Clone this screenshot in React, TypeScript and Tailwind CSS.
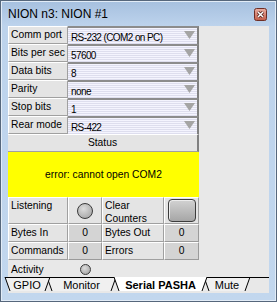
const settings = [
  { label: "Comm port", value: "RS-232 (COM2 on PC)" },
  { label: "Bits per sec", value: "57600" },
  { label: "Data bits", value: "8" },
  { label: "Parity", value: "none" },
  { label: "Stop bits", value: "1" },
  { label: "Rear mode", value: "RS-422" },
];

const tabs = [
  { name: "GPIO", w: "w-[36px]", ml: "ml-[1px]" },
  { name: "Monitor", w: "w-[59px]", ml: "ml-[7px]" },
  { name: "Serial PASHA", w: "w-[83px]", ml: "ml-[8px]", active: true },
  { name: "Mute", w: "w-[36px]", ml: "ml-[7px]" },
];

const cell =
  "bg-[#e4e4e4] border-t border-l border-t-white border-l-white border-b border-r border-b-[#a0a0a0] border-r-[#a0a0a0]";
const counter =
  "bg-[#d4d4d4] border-t border-l border-t-white border-l-white border-b border-r border-b-[#9a9a9a] border-r-[#9a9a9a] flex items-center justify-center";

function Led({ size }: { size: "lg" | "sm" }) {
  return (
    <div
      className={`rounded-full border border-[#3a3a3a] bg-[radial-gradient(circle_at_40%_35%,#dcdcdc,#9c9c9c)] ${
        size === "lg" ? "w-[16px] h-[16px]" : "w-[11px] h-[11px]"
      }`}
    />
  );
}

function TabOutline() {
  // bottom sheet tabs, screen coordinates
  const back = [
    { tl: 204, bl: 209, br: 245, tr: 250 },
    { tl: 47, bl: 52, br: 111, tr: 116 },
    { tl: 5, bl: 10, br: 45, tr: 50 },
  ];
  const act = { tl: 114, bl: 119, br: 202, tr: 207 };
  return (
    <svg
      className="absolute left-[-8px] top-0 pointer-events-none"
      width="277"
      height="16"
      viewBox="0 277 277 16"
    >
      {back.map((t, i) => (
        <g key={i}>
          <polygon points={`${t.tl},278 ${t.tr},278 ${t.br},292 ${t.bl},292`} fill="#f0f0f0" />
          <polyline points={`${t.tl},278 ${t.bl},292`} stroke="#000" fill="none" />
          <polyline points={`${t.br},292 ${t.tr},278`} stroke="#000" fill="none" />
        </g>
      ))}
      <polygon points={`${act.tl},278 ${act.tr},278 ${act.br},292 ${act.bl},292`} fill="#fff" />
      <polyline points={`${act.tl},278 ${act.bl},292`} stroke="#000" fill="none" />
      <polyline points={`${act.br},292 ${act.tr},278`} stroke="#000" fill="none" />
      <line x1="5" y1="278.5" x2={act.tl} y2="278.5" stroke="#000" />
      <line x1={act.tr} y1="278.5" x2="269" y2="278.5" stroke="#000" />
    </svg>
  );
}

export default function App() {
  return (
    <div className="w-[277px] h-[302px] flex flex-col border border-[#56677c] shadow-[inset_0_0_0_1px_#e2ecf7] bg-[linear-gradient(180deg,#a6c0df_0px,#bdd3ec_25px,#c2d7ee_100%)] font-['Liberation_Sans',Arial,sans-serif] text-black">
      {/* Title bar */}
      <div className="h-[25px] flex items-center justify-between pl-[7px] pr-[9px]">
        <span className="text-[12px] leading-none mt-[1px]">NION n3: NION #1</span>
        <svg width="13" height="13" viewBox="0 0 13 13" className="mt-[2px]">
          <defs>
            <linearGradient id="cb" x1="0" y1="0" x2="0" y2="1">
              <stop offset="0" stopColor="#e9aea2" />
              <stop offset="1" stopColor="#c25c48" />
            </linearGradient>
          </defs>
          <rect x="0.5" y="0.5" width="12" height="12" rx="2" fill="url(#cb)" stroke="#6e2e25" />
          <path d="M4 4 L9 9 M9 4 L4 9" stroke="#4a1a14" strokeWidth="3" />
          <path d="M4 4 L9 9 M9 4 L4 9" stroke="#fff" strokeWidth="1.5" />
        </svg>
      </div>

      {/* Client area */}
      <div className="mx-[7px] h-[267px] bg-[#e8e8e8] flex flex-col text-[10.3px]">
        <div className="w-[191px] flex flex-col">
          {settings.map((s) => (
            <div key={s.label} className="flex h-[18px]">
              <div className={`${cell} w-[60px] pl-[2px] flex items-center`}>{s.label}</div>
              <div className="relative flex-1 flex items-center pl-[3px] pt-[2px] text-[10px] tracking-[-0.6px] border-t-2 border-t-[#8c8c8c] border-r-2 border-r-[#808080] bg-[repeating-linear-gradient(180deg,#f4f4fe_0px,#f4f4fe_1px,#dedeee_1px,#dedeee_2px)]">
                {s.value}
                <svg className="absolute right-[2px] top-[3px]" width="11" height="8" viewBox="0 0 11 8">
                  <polygon points="0,0 11,0 5.5,8" fill="#a4a4a4" />
                </svg>
              </div>
            </div>
          ))}

          <div className="h-[18px] flex items-center justify-center bg-[#e4e4e4] border-t border-t-white border-b border-b-[#a0a0a0] border-r-2 border-r-[#808080]">
            Status
          </div>
          <div className="h-[45px] bg-[#ffff00] flex items-center justify-center">
            error: cannot open COM2
          </div>

          <div className="flex h-[27px]">
            <div className={`${cell} w-[60px] pl-[2px] pt-[2px] leading-[12px]`}>Listening</div>
            <div className={`${cell} w-[34px] flex items-center justify-center`}>
              <Led size="lg" />
            </div>
            <div className={`${cell} w-[62px] pl-[2px] pt-[1px] leading-[13px]`}>
              Clear
              <br />
              Counters
            </div>
            <div className={`${cell} w-[35px] flex items-center justify-center`}>
              <div className="w-[28px] h-[23px] rounded-[4px] border border-[#3c3c3c] bg-[linear-gradient(180deg,#d2d2d2,#a6a6a6)] shadow-[inset_1px_1px_0_#ececec]" />
            </div>
          </div>

          <div className="flex h-[18px]">
            <div className={`${cell} w-[60px] pl-[2px] flex items-center`}>Bytes In</div>
            <div className={`${counter} w-[34px]`}>0</div>
            <div className={`${cell} w-[62px] pl-[2px] flex items-center`}>Bytes Out</div>
            <div className={`${counter} w-[35px]`}>0</div>
          </div>
          <div className="flex h-[18px]">
            <div className={`${cell} w-[60px] pl-[2px] flex items-center`}>Commands</div>
            <div className={`${counter} w-[34px]`}>0</div>
            <div className={`${cell} w-[62px] pl-[2px] flex items-center`}>Errors</div>
            <div className={`${counter} w-[35px]`}>0</div>
          </div>

          <div className="flex h-[16px] items-center">
            <div className="w-[60px] pl-[3px] pt-[3px]">Activity</div>
            <div className="w-[34px] flex justify-center pt-[3px]">
              <Led size="sm" />
            </div>
          </div>
        </div>

        {/* Tabs */}
        <div className="relative h-[17px] flex text-[11px]">
          <TabOutline />
          {tabs.map((t) => (
            <div
              key={t.name}
              className={`relative ${t.w} ${t.ml} mt-[3px] h-[13px] leading-[13px] text-center whitespace-nowrap ${
                t.active ? "font-bold" : ""
              }`}
            >
              {t.name}
            </div>
          ))}
        </div>
      </div>
    </div>
  );
}
